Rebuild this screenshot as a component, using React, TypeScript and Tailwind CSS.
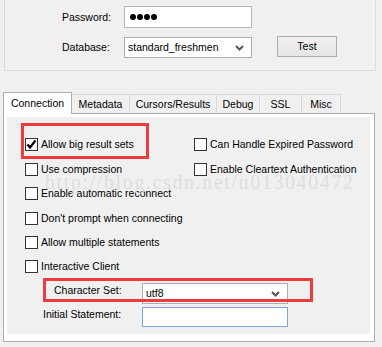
import React from "react";

function Chevron() {
    return (
        <svg width="9" height="6" viewBox="0 0 9 6" className="shrink-0">
            <polyline points="1,1 4.5,4.5 8,1" fill="none" stroke="#555" strokeWidth="2" />
        </svg>
    );
}

function Checkbox({ label, checked }: { label: string; checked?: boolean }) {
    return (
        <div className="flex items-center gap-[3px]">
            <div className="w-[13px] h-[13px] border border-[#333] bg-white flex items-center justify-center">
                {checked && (
                    <svg width="11" height="11" viewBox="0 0 11 11">
                        <polyline points="1.5,5.5 4,8.5 9.5,1.5" fill="none" stroke="#000" strokeWidth="2.2" />
                    </svg>
                )}
            </div>
            <span className="whitespace-nowrap">{label}</span>
        </div>
    );
}

const tabs = [
    { name: "Metadata", w: "w-[59px]" },
    { name: "Cursors/Results", w: "w-[88px]" },
    { name: "Debug", w: "w-[44px]" },
    { name: "SSL", w: "w-[43px]" },
    { name: "Misc", w: "w-[40px]" },
];

export default function App() {
    return (
        <div className="relative w-[382px] h-[347px] overflow-hidden bg-[#f0f0f0] text-[10.5px] text-black font-['Liberation_Sans',sans-serif] leading-none">
            {/* connection panel */}
            <div className="ml-[4px] w-[372px] h-[71px] border-x border-b border-[#dcdcdc] pl-[57px] pt-[6px]">
                <div className="flex items-center h-[22px]">
                    <span className="w-[62px]">Password:</span>
                    <div className="w-[128px] h-[22px] border border-[#b5b5b5] bg-white flex items-center pl-[5px] gap-[1px]">
                        {[0, 1, 2, 3].map((i) => (
                            <span key={i} className="w-[6px] h-[6px] rounded-full bg-black" />
                        ))}
                    </div>
                </div>
                <div className="flex items-center h-[21px] mt-[9px]">
                    <span className="w-[62px]">Database:</span>
                    <div className="w-[128px] h-[21px] border border-[#adadad] bg-white flex items-center justify-between pl-[3px] pr-[7px]">
                        <span>standard_freshmen</span>
                        <Chevron />
                    </div>
                    <button className="ml-[25px] -mt-[2px] w-[60px] h-[21px] border border-[#adadad] bg-gradient-to-b from-[#f0f0f0] to-[#e5e5e5] flex items-center justify-center">
                        Test
                    </button>
                </div>
            </div>

            {/* tabs */}
            <div className="mt-[21px] ml-[3px] flex items-end">
                <div className="relative z-10 w-[69px] h-[22px] -mb-[1px] border-x border-t border-[#adadad] bg-white flex items-start justify-center pt-[5px]">
                    Connection
                </div>
                {tabs.map((t) => (
                    <div key={t.name} className={`${t.w} -ml-[1px] h-[19px] border-x border-t border-[#d9d9d9] bg-[#f0f0f0] flex items-center justify-center`}>
                        {t.name}
                    </div>
                ))}
            </div>
            <div className="ml-[3px] w-[372px] h-[229px] border border-[#adadad] bg-white pt-[3px] pl-[3px] pr-[4px] pb-[7px]">
                <div className="h-full bg-[#f0f0f0] pt-[15px] pl-[18px]">
                    <div className="flex items-center h-[25px]">
                        <div className="w-[169px]">
                            <Checkbox label="Allow big result sets" checked />
                        </div>
                        <Checkbox label="Can Handle Expired Password" />
                    </div>
                    <div className="flex items-center h-[24px]">
                        <div className="w-[169px]">
                            <Checkbox label="Use compression" />
                        </div>
                        <Checkbox label="Enable Cleartext Authentication" />
                    </div>
                    <div className="flex items-center h-[25px]">
                        <Checkbox label="Enable automatic reconnect" />
                    </div>
                    <div className="flex items-center h-[24px]">
                        <Checkbox label="Don't prompt when connecting" />
                    </div>
                    <div className="flex items-center h-[24px]">
                        <Checkbox label="Allow multiple statements" />
                    </div>
                    <div className="flex items-center h-[24px]">
                        <Checkbox label="Interactive Client" />
                    </div>

                    <div className="-ml-[18px] pl-[36px] mt-[5px]">
                        <div className="flex items-center h-[21px]">
                            <span className="w-[99px] pl-[11px] pb-[6px]">Character Set:</span>
                            <div className="w-[146px] h-[21px] border border-[#adadad] bg-white flex items-center justify-between pl-[3px] pr-[7px]">
                                <span>utf8</span>
                                <Chevron />
                            </div>
                        </div>
                        <div className="flex items-center h-[20px] mt-[3px]">
                            <span className="w-[99px] pb-[6px]">Initial Statement:</span>
                            <div className="w-[146px] h-[20px] border border-[#7ba6da] bg-white" />
                        </div>
                    </div>
                </div>
            </div>

            {/* watermark */}
            <div className="absolute left-[45px] top-[172px] text-[20px] tracking-[1.6px] text-[#dedede] font-['Liberation_Serif',serif] pointer-events-none">
                http://blog.csdn.net/u013040472
            </div>

            {/* annotation boxes */}
            <div className="absolute left-[21px] top-[123px] w-[128px] h-[36px] border-[3px] border-[#ef3b3b]" />
            <div className="absolute left-[43px] top-[278px] w-[270px] h-[24px] border-[3px] border-[#ef3b3b]" />
        </div>
    );
}
